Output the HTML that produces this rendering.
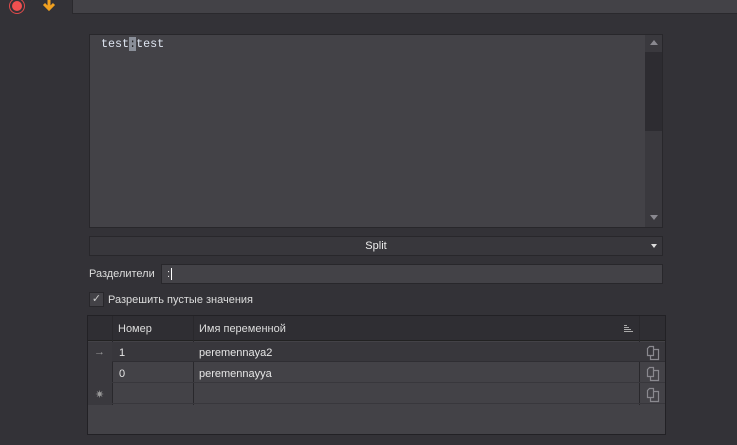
<!DOCTYPE html><html><head><meta charset="utf-8"><style>
*{margin:0;padding:0;box-sizing:border-box}
body{width:737px;height:445px;background:#333237;font-family:"Liberation Sans",sans-serif;font-size:11px;color:#e6e6e6;position:relative;overflow:hidden}
.a{position:absolute}
</style></head><body>
<div class="a" style="left:72px;top:-1px;width:666px;height:15px;background:#434247;border:1px solid #2a292d"></div>
<div class="a" style="left:9px;top:-2px;width:16px;height:16px;border-radius:50%;border:1.5px solid #e04a4a"></div>
<div class="a" style="left:12px;top:1px;width:10px;height:10px;border-radius:50%;background:#f05050"></div>
<svg class="a" style="left:41px;top:0" width="16" height="12"><path d="M8 0V9M3 4L8 9L13 4" stroke="#f0a020" stroke-width="3" fill="none"/></svg>
<div class="a" style="left:89px;top:34px;width:574px;height:194px;background:#434247;border:1px solid #28272b"></div>
<div class="a" style="left:101px;top:37px;font-family:'Liberation Mono',monospace;font-size:11.7px;color:#dde4f0">test<span style="background:#8a8f99;color:#222">:</span>test</div>
<div class="a" style="left:645px;top:35px;width:17px;height:192px;background:#3a393e"></div>
<div class="a" style="left:645px;top:52px;width:17px;height:79px;background:#2d2c31"></div>
<div class="a" style="left:650px;top:40px;border:4px solid transparent;border-bottom:5px solid #8a8990;border-top:0"></div>
<div class="a" style="left:650px;top:215px;border:4px solid transparent;border-top:5px solid #8a8990;border-bottom:0"></div>
<div class="a" style="left:89px;top:236px;width:574px;height:20px;background:#38373c;border:1px solid #28272b;text-align:center;line-height:18px;color:#eee">Split</div>
<div class="a" style="left:651px;top:244px;border:3px solid transparent;border-top:4px solid #ddd;border-bottom:0"></div>
<div class="a" style="left:89px;top:268px;color:#ddd">Разделители</div>
<div class="a" style="left:161px;top:264px;width:502px;height:20px;background:#434247;border:1px solid #28272b;padding-left:5px;line-height:19px">:<span style="border-left:1px solid #fff;margin-left:1px"></span></div>
<div class="a" style="left:89px;top:292px;width:15px;height:15px;background:#434247;border:1px solid #28272b;color:#ccc;font-size:11px;line-height:13px;text-align:center">✓</div>
<div class="a" style="left:108px;top:294px;color:#ddd">Разрешить пустые значения</div>
<div class="a" style="left:87px;top:315px;width:579px;height:120px;background:#434247;border:1px solid #222125"></div>
<div class="a" style="left:88px;top:316px;width:577px;height:25px;background:#2f2e33;border-bottom:1px solid #222"></div>
<div class="a" style="left:112px;top:316px;width:1px;height:89px;background:#29282c"></div>
<div class="a" style="left:193px;top:316px;width:1px;height:89px;background:#29282c"></div>
<div class="a" style="left:639px;top:316px;width:1px;height:89px;background:#29282c"></div>
<div class="a" style="left:118px;top:323px;color:#ddd">Номер</div>
<div class="a" style="left:199px;top:323px;color:#ddd">Имя переменной</div>
<svg class="a" style="left:624px;top:325px" width="10" height="8"><path d="M0 .5H3M0 2.5H5M0 4.5H7M0 6.5H9" stroke="#aaa"/></svg>
<div class="a" style="left:88px;top:342px;width:577px;height:20px;background:#38373c;border-bottom:1px solid #2f2e33"></div>
<div class="a" style="left:88px;top:363px;width:577px;height:20px;border-bottom:1px solid #38373c"></div>
<div class="a" style="left:88px;top:384px;width:577px;height:20px;border-bottom:1px solid #38373c"></div>
<div class="a" style="left:88px;top:342px;width:24px;height:63px;background:#3a393e"></div>
<div class="a" style="left:94px;top:346px;color:#999">→</div>
<div class="a" style="left:95px;top:388px;color:#999">✷</div>
<div class="a" style="left:119px;top:347px">1</div><div class="a" style="left:199px;top:347px">peremennaya2</div>
<div class="a" style="left:119px;top:368px">0</div><div class="a" style="left:199px;top:368px">peremennayya</div>
<svg class="a" style="left:646px;top:345px" width="16" height="60"><g fill="none" stroke="#8a898f" stroke-width="1.2"><path d="M1.5 3.5L3.5 1.5H7.5V10.5H1.5ZM7.5 4.5H12.5V14.5H4.5V10.5"/><path transform="translate(0,21)" d="M1.5 3.5L3.5 1.5H7.5V10.5H1.5ZM7.5 4.5H12.5V14.5H4.5V10.5"/><path transform="translate(0,42)" d="M1.5 3.5L3.5 1.5H7.5V10.5H1.5ZM7.5 4.5H12.5V14.5H4.5V10.5"/></g></svg>
</body></html>
